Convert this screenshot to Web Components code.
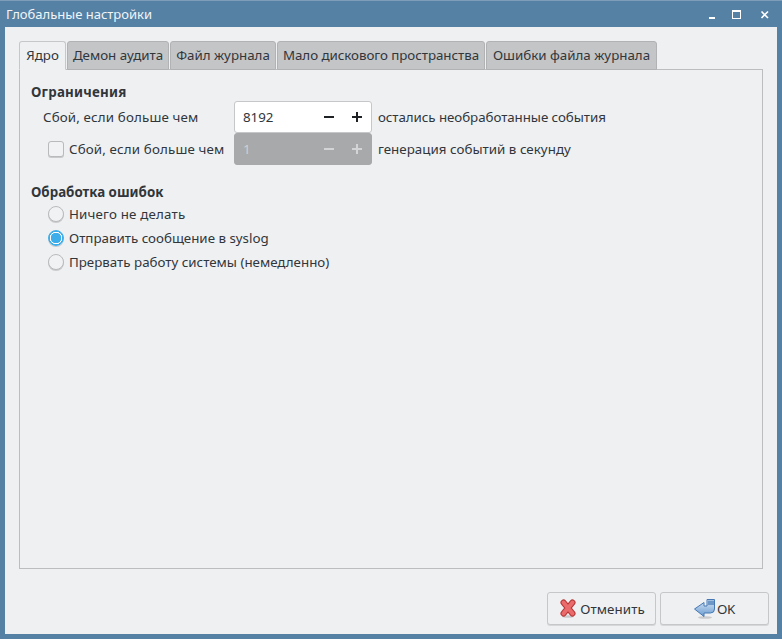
<!DOCTYPE html>
<html lang="ru">
<head>
<meta charset="utf-8">
<title>Глобальные настройки</title>
<style>
html, body { margin: 0; padding: 0; }
body { width: 782px; height: 639px; overflow: hidden; font: 13.33px "Noto Sans", sans-serif; color: #31363b; }
</style>
</head>
<body>
<settings-window title="Глобальные настройки">
  <tab-bar>
    <tab-item active w="47">Ядро</tab-item>
    <tab-item w="102">Демон аудита</tab-item>
    <tab-item w="106">Файл журнала</tab-item>
    <tab-item w="208" style="letter-spacing:-.04px">Мало дискового пространства</tab-item>
    <tab-item w="171">Ошибки файла журнала</tab-item>
  </tab-bar>
  <tab-panel>
    <section-title style="letter-spacing:.25px">Ограничения</section-title>
    <limit-row label="Сбой, если больше чем" value="8192" after="остались необработанные события" style="--after-ls:-.06px"></limit-row>
    <limit-row check disabled label="Сбой, если больше чем" value="1" after="генерация событий в секунду" style="--after-ls:.03px"></limit-row>
    <section-title class="second">Обработка ошибок</section-title>
    <radio-row style="letter-spacing:.18px">Ничего не делать</radio-row>
    <radio-row checked>Отправить сообщение в syslog</radio-row>
    <radio-row>Прервать работу системы (немедленно)</radio-row>
  </tab-panel>
  <dialog-button slot="actions" icon="cancel" style="--gap:4px;--shift:2px;letter-spacing:.1px">Отменить</dialog-button>
  <dialog-button slot="actions" icon="ok" style="--gap:1px;--shift:0px;letter-spacing:-.3px">OK</dialog-button>
</settings-window>

<script>
class SettingsWindow extends HTMLElement {
  constructor() {
    super();
    this.attachShadow({ mode: "open" }).innerHTML = `
      <style>
        :host { display: flex; flex-direction: column; width: 782px; height: 639px; box-sizing: border-box;
                background: #5581a5; border-top: 1px solid #7d9db8; }
        .bar { height: 26px; flex: none; display: flex; align-items: center; padding-left: 6px; box-sizing: border-box;
               color: #fff; font-size: 13px; }
        .title { flex: 1; opacity: .92; }
        .btns { display: flex; align-items: center; }
        .btns svg { display: block; width: 28px; height: 16px; }
        .body { flex: 1; margin: 0 5px 5px; background: #eff0f2; display: flex; flex-direction: column;
                padding: 14px 14px 9px; box-sizing: border-box; min-height: 0; }
        .main { flex: 1; display: flex; flex-direction: column; min-height: 0; }
        .actions { flex: none; display: flex; justify-content: flex-end; gap: 4px; margin: 23px -6px 0 0; }
      </style>
      <div class="bar">
        <span class="title"></span>
        <span class="btns">
          <svg viewBox="0 0 28 16"><rect x="11" y="11" width="6" height="2" fill="#fff"/></svg>
          <svg viewBox="0 0 28 16"><rect x="6.500" y="4.500" width="8" height="8" fill="none" stroke="#fff"/><rect x="6" y="4" width="9" height="2" fill="#fff"/></svg>
          <svg viewBox="0 0 28 16"><path d="M7.500 5.500l6.500 6.500M14 5.500l-6.500 6.500" stroke="#fff" stroke-width="1.600" fill="none"/></svg>
        </span>
      </div>
      <div class="body">
        <div class="main"><slot></slot></div>
        <div class="actions"><slot name="actions"></slot></div>
      </div>`;
    this.shadowRoot.querySelector(".title").textContent = this.getAttribute("title");
  }
}

class TabBar extends HTMLElement {
  constructor() {
    super();
    this.attachShadow({ mode: "open" }).innerHTML = `
      <style>
        :host { display: flex; height: 29px; flex: none; gap: 1px; position: relative; z-index: 1; margin-bottom: -1px; }
      </style>
      <slot></slot>`;
  }
}

class TabItem extends HTMLElement {
  constructor() {
    super();
    this.attachShadow({ mode: "open" }).innerHTML = `
      <style>
        :host { display: flex; align-items: center; justify-content: center; box-sizing: border-box; height: 29px;
                background: #c4c5c7; border: 1px solid #b1b2b4; border-radius: 3px 3px 0 0;
                padding-bottom: 2px; white-space: nowrap; }
        :host([active]) { background: #eff0f2; border-color: #c6c7c9; border-bottom-color: #eff0f2; }
      </style>
      <slot></slot>`;
    this.style.width = this.getAttribute("w") + "px";
  }
}

class TabPanel extends HTMLElement {
  constructor() {
    super();
    this.attachShadow({ mode: "open" }).innerHTML = `
      <style>
        :host { display: flex; flex-direction: column; flex: 1; box-sizing: border-box; border: 1px solid #bcbdbf;
                padding: 13px 11px; min-height: 0; }
      </style>
      <slot></slot>`;
  }
}

class SectionTitle extends HTMLElement {
  constructor() {
    super();
    this.attachShadow({ mode: "open" }).innerHTML = `
      <style>
        :host { display: block; font-weight: 700; line-height: 19px; margin-bottom: -1px; }
        :host(.second) { margin-top: 18px; margin-bottom: 0; }
      </style>
      <slot></slot>`;
  }
}

class LimitRow extends HTMLElement {
  constructor() {
    super();
    const check = this.hasAttribute("check");
    this.attachShadow({ mode: "open" }).innerHTML = `
      <style>
        :host { display: flex; align-items: center; height: 32px; white-space: nowrap; }
        .lead { width: 203px; box-sizing: border-box; padding-left: ${check ? 17 : 12}px; display: flex; align-items: center; gap: 5px; letter-spacing: .15px; }
        .box { width: 16px; height: 16px; box-sizing: border-box; border: 1px solid #b9babc; border-radius: 3px; background: #f1f2f3; box-shadow: 0 1px 0 #c9cacc; }
        .spin { width: 138px; height: 32px; box-sizing: border-box; border: 1px solid #c6c7c9; border-radius: 3px;
                background: #fff; display: flex; align-items: center; padding-left: 8px; margin-right: 6px; }
        .spin .val { flex: 1; }
        .spin svg { display: block; width: 28px; height: 14px; flex: none; }
        .spin svg path { stroke: #1e2224; stroke-width: 2; fill: none; }
        .after { letter-spacing: var(--after-ls, 0); }
        :host([disabled]) .spin { background: #a8a9ab; border-color: #a8a9ab; color: #cfd0d2; }
        :host([disabled]) .spin svg path { stroke: #d3d4d6; }
      </style>
      <div class="lead">${check ? '<span class="box"></span>' : ""}<span>${this.getAttribute("label")}</span></div>
      <div class="spin">
        <span class="val">${this.getAttribute("value")}</span>
        <svg viewBox="0 0 28 14"><path d="M9 7h10"/></svg>
        <svg viewBox="0 0 28 14"><path d="M9 7h10M14 2v10"/></svg>
      </div>
      <span class="after">${this.getAttribute("after")}</span>`;
  }
}

class RadioRow extends HTMLElement {
  constructor() {
    super();
    this.attachShadow({ mode: "open" }).innerHTML = `
      <style>
        :host { display: flex; align-items: center; gap: 5px; height: 24px; padding-left: 17px; white-space: nowrap; }
        .dot { width: 16px; height: 16px; box-sizing: border-box; border: 1px solid #b9babc; border-radius: 50%;
               background: #f1f2f3; box-shadow: 0 1px 0 #c9cacc; flex: none; }
        :host([checked]) .dot { background: radial-gradient(circle, #3daee9 0 5px, #fff 5.500px 6px, #3daee9 6.500px); border-color: #3daee9; }
      </style>
      <span class="dot"></span><span><slot></slot></span>`;
  }
}

const ICONS = {
  cancel: `<svg width="16" height="19" viewBox="0 0 16 19">
    <ellipse cx="8" cy="17.500" rx="6" ry="1.300" fill="#c9cacc"/>
    <path d="M3.500 3.500L12.500 14.500M12.500 3.500L3.500 14.500" stroke="#b93636" stroke-width="6" stroke-linecap="round" fill="none"/>
    <path d="M3.500 3.500L12.500 14.500M12.500 3.500L3.500 14.500" stroke="#ea6b6b" stroke-width="4" stroke-linecap="round" fill="none"/>
  </svg>`,
  ok: `<svg width="22" height="21" viewBox="0 0 22 21">
    <defs><linearGradient id="b" x1="0" y1="0" x2="0" y2="1"><stop offset="0" stop-color="#dbe8f6"/><stop offset="1" stop-color="#6a9bd0"/></linearGradient></defs>
    <ellipse cx="11" cy="19.500" rx="7" ry="1.300" fill="#c9cacc"/>
    <path d="M.5 11L10 4.500V8H13V1.500H20.500V11Q20.500 15 16.500 15H10V18.500Z" fill="url(#b)" stroke="#4578b4" stroke-linejoin="round"/>
    <path d="M14 2.500H20V7H14Z" fill="#6d97c6"/>
  </svg>`
};

class DialogButton extends HTMLElement {
  constructor() {
    super();
    this.attachShadow({ mode: "open" }).innerHTML = `
      <style>
        :host { display: flex; align-items: center; justify-content: center; gap: var(--gap, 2px); box-sizing: border-box; width: 109px; height: 33px;
                padding-left: var(--shift, 0); border: 1px solid #c6c7c9; border-radius: 3px; background: #eff0f2; box-shadow: 0 1px 0 #d6d7d9; }
        svg { display: block; }
      </style>
      ${ICONS[this.getAttribute("icon")]}<span><slot></slot></span>`;
  }
}

customElements.define("settings-window", SettingsWindow);
customElements.define("tab-bar", TabBar);
customElements.define("tab-item", TabItem);
customElements.define("tab-panel", TabPanel);
customElements.define("section-title", SectionTitle);
customElements.define("limit-row", LimitRow);
customElements.define("radio-row", RadioRow);
customElements.define("dialog-button", DialogButton);
</script>
</body>
</html>
